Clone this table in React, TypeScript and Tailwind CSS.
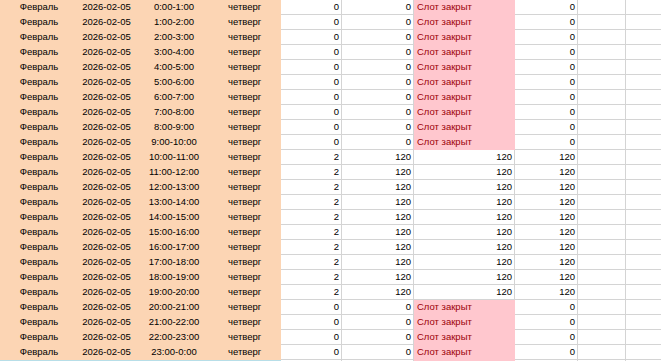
// Spreadsheet export — hourly slot schedule for one day (2026-02-05).
// Orange block = descriptor columns, pink = closed slot ("Слот закрыт").

interface SlotRow {
  month: string
  date: string
  time: string
  weekday: string
  open: boolean
}

const ROWS: SlotRow[] = Array.from({ length: 24 }, (_, h) => ({
  month: "Февраль",
  date: "2026-02-05",
  time: `${h}:00-${(h + 1) % 24}:00`,
  weekday: "четверг",
  open: h >= 10 && h < 20,
}))

const cellNum =
  "h-[15px] shrink-0 border-b border-r border-[#d4d4d4] pr-[2px] text-right leading-[14px]"

function Row({ row }: { row: SlotRow }) {
  return (
    <div className="flex h-[15px]">
      {/* descriptor block — filled, no gridlines */}
      <div className="flex h-[15px] w-[281px] shrink-0 bg-[#fcd5b4] leading-[14px]">
        <div className="w-[78px] shrink-0 text-center">{row.month}</div>
        <div className="w-[57px] shrink-0 text-center">{row.date}</div>
        <div className="w-[78px] shrink-0 text-center">{row.time}</div>
        <div className="w-[68px] shrink-0 pl-[15px]">{row.weekday}</div>
      </div>

      <div className={`${cellNum} w-[61px]`}>{row.open ? 2 : 0}</div>
      <div className={`${cellNum} w-[72px]`}>{row.open ? 120 : 0}</div>

      {row.open ? (
        <div className={`${cellNum} w-[101px]`}>120</div>
      ) : (
        <div className="h-[15px] w-[101px] shrink-0 bg-[#ffc7ce] pl-[3px] leading-[14px] text-[#9c0006]">
          Слот закрыт
        </div>
      )}

      <div className={`${cellNum} w-[63px]`}>{row.open ? 120 : 0}</div>
      <div className={`${cellNum} w-[48px]`} />
      <div className={`${cellNum} w-[60px]`} />
    </div>
  )
}

export default function App() {
  return (
    <div className="h-[361px] w-[661px] overflow-hidden bg-white font-['Liberation_Sans',Arial,sans-serif] text-[9.5px] text-black">
      {ROWS.map((row) => (
        <Row key={row.time} row={row} />
      ))}

      {/* next row, barely visible at the bottom edge */}
      <div className="flex h-[15px]">
        <div className="h-[15px] w-[281px] shrink-0 bg-[#b7dee8]" />
        <div className="h-[15px] w-[61px] shrink-0 border-r border-[#d4d4d4]" />
        <div className="h-[15px] w-[72px] shrink-0 border-r border-[#d4d4d4]" />
        <div className="h-[15px] w-[101px] shrink-0 bg-[#ffc7ce]" />
        <div className="h-[15px] w-[63px] shrink-0 border-r border-[#d4d4d4]" />
        <div className="h-[15px] w-[48px] shrink-0 border-r border-[#d4d4d4]" />
      </div>
    </div>
  )
}
